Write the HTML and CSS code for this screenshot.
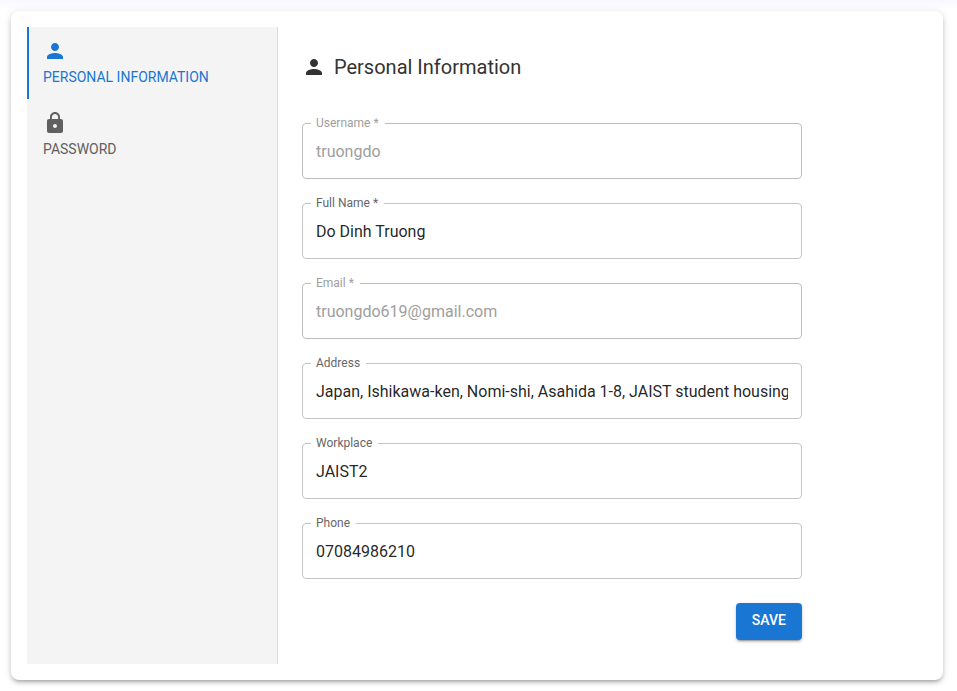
FILE: index.html
```html
<!DOCTYPE html>
<html lang="en">
<head>
<meta charset="utf-8">
<meta name="viewport" content="width=device-width, initial-scale=1">
<title>Personal Information</title>
<link rel="stylesheet" href="styles.css">
</head>
<body>
<main class="card">
  <nav class="tabs">
    <button type="button" class="tab tab-active">
      <svg class="icon" viewBox="0 0 24 24" aria-hidden="true"><path d="M12 12c2.210 0 4-1.790 4-4s-1.790-4-4-4-4 1.790-4 4 1.790 4 4 4zm0 2c-2.670 0-8 1.340-8 4v2h16v-2c0-2.660-5.330-4-8-4z"/></svg>
      <span>PERSONAL INFORMATION</span>
    </button>
    <button type="button" class="tab">
      <svg class="icon" viewBox="0 0 24 24" aria-hidden="true"><path d="M18 8h-1V6c0-2.760-2.240-5-5-5S7 3.240 7 6v2H6c-1.100 0-2 .9-2 2v10c0 1.100.9 2 2 2h12c1.100 0 2-.9 2-2V10c0-1.100-.9-2-2-2zm-6 9c-1.100 0-2-.9-2-2s.9-2 2-2 2 .9 2 2-.9 2-2 2zm3.100-9H8.900V6c0-1.710 1.390-3.100 3.100-3.100s3.100 1.390 3.100 3.100v2z"/></svg>
      <span>PASSWORD</span>
    </button>
  </nav>
  <section class="panel">
    <h1 class="title">
      <svg class="icon" viewBox="0 0 24 24" aria-hidden="true"><path d="M12 12c2.210 0 4-1.790 4-4s-1.790-4-4-4-4 1.790-4 4 1.790 4 4 4zm0 2c-2.670 0-8 1.340-8 4v2h16v-2c0-2.660-5.330-4-8-4z"/></svg>
      <span>Personal Information</span>
    </h1>
    <form class="form">
      <div class="field">
        <label class="label label-disabled" for="username">Username *</label>
        <input class="input" id="username" type="text" value="truongdo" disabled>
      </div>
      <div class="field">
        <label class="label" for="fullname">Full Name *</label>
        <input class="input" id="fullname" type="text" value="Do Dinh Truong" required>
      </div>
      <div class="field">
        <label class="label label-disabled" for="email">Email *</label>
        <input class="input" id="email" type="email" value="truongdo619@gmail.com" disabled>
      </div>
      <div class="field">
        <label class="label" for="address">Address</label>
        <input class="input" id="address" type="text" value="Japan, Ishikawa-ken, Nomi-shi, Asahida 1-8, JAIST student housing">
      </div>
      <div class="field">
        <label class="label" for="workplace">Workplace</label>
        <input class="input" id="workplace" type="text" value="JAIST2">
      </div>
      <div class="field">
        <label class="label" for="phone">Phone</label>
        <input class="input" id="phone" type="tel" value="07084986210">
      </div>
      <button type="submit" class="save">SAVE</button>
    </form>
  </section>
</main>
</body>
</html>
```
FILE: styles.css
```css
* {
  box-sizing: border-box;
}

body {
  margin: 0;
  padding: 11px 14px 11px 11px;
  font-family: Roboto, "Liberation Sans", sans-serif;
  color: rgba(0, 0, 0, 0.87);
  background: linear-gradient(#f7f8ff, #fff 10px) no-repeat #fff;
}

.card {
  display: flex;
  padding: 16px;
  border-radius: 8px;
  background: #fff;
  box-shadow:
    0 3px 3px -2px rgba(0, 0, 0, 0.2),
    0 3px 4px rgba(0, 0, 0, 0.14),
    0 1px 8px rgba(0, 0, 0, 0.12);
}

.icon {
  display: block;
  width: 24px;
  height: 24px;
  fill: currentColor;
}

.tabs {
  flex: 0 1 251px;
  background: #f4f4f4;
  border-right: 1px solid #dcdcdc;
}

.tab {
  display: flex;
  flex-direction: column;
  align-items: flex-start;
  gap: 6px;
  width: 100%;
  padding: 12px 16px 14px 14px;
  border: 0;
  border-left: 2px solid transparent;
  background: none;
  font: 400 14px/16px Roboto, "Liberation Sans", sans-serif;
  color: #606060;
  text-align: left;
  cursor: pointer;
}

.tab-active {
  border-left-color: #1976d2;
  color: #1976d2;
}

.panel {
  flex: 1;
  min-width: 0;
  padding: 24px;
}

.title {
  display: flex;
  align-items: center;
  gap: 8px;
  margin: 0 0 40px;
  font-size: 20px;
  line-height: 32px;
  font-weight: 400;
  color: #333;
}

.form {
  display: flex;
  flex-direction: column;
  gap: 24px;
  max-width: 500px;
}

.field {
  position: relative;
}

.label {
  position: absolute;
  top: -8px;
  left: 9px;
  padding: 0 6px 0 5px;
  background: #fff;
  font-size: 12px;
  line-height: 16px;
  color: #666;
}

.label-disabled {
  color: #9e9e9e;
}

.input {
  display: block;
  width: 100%;
  height: 56px;
  padding: 0 13px;
  border: 1px solid #c4c4c4;
  border-radius: 4px;
  background: #fff;
  font: 400 16px/24px Roboto, "Liberation Sans", sans-serif;
  color: rgba(0, 0, 0, 0.87);
}

.input:disabled {
  border-color: #bdbdbd;
  color: #9e9e9e;
}

.save {
  align-self: flex-end;
  padding: 5px 16px 8px;
  border: 0;
  border-radius: 4px;
  background: #1976d2;
  font: 500 14px/24px Roboto, "Liberation Sans", sans-serif;
  color: #fff;
  cursor: pointer;
  box-shadow:
    0 3px 1px -2px rgba(0, 0, 0, 0.2),
    0 2px 2px rgba(0, 0, 0, 0.14),
    0 1px 5px rgba(0, 0, 0, 0.12);
}
```
